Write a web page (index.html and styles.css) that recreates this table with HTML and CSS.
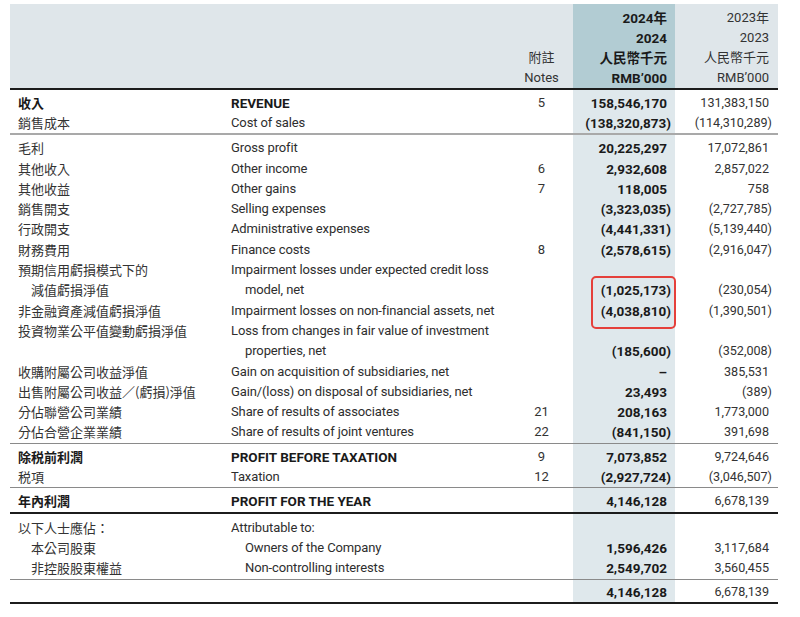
FILE: index.html
```html
<!DOCTYPE html>
<html lang="zh-Hant">
<head>
<meta charset="utf-8">
<title>綜合損益表</title>
<link rel="stylesheet" href="styles.css">
</head>
<body>
<table class="stmt">
  <colgroup>
    <col class="w-zh"><col class="w-en"><col class="w-note"><col class="w-cur"><col class="w-prev">
  </colgroup>
  <thead>
    <tr class="head">
      <th></th>
      <th></th>
      <th class="note"><div>附註</div><div>Notes</div></th>
      <th class="cur"><div>2024年</div><div>2024</div><div>人民幣千元</div><div>RMB’000</div></th>
      <th class="prev"><div>2023年</div><div>2023</div><div>人民幣千元</div><div>RMB’000</div></th>
    </tr>
  </thead>
  <tbody class="s1">
    <tr class="first"><td class="zh b">收入</td><td class="en b">REVENUE</td><td class="note">5</td><td class="cur pos">158,546,170</td><td class="prev pos">131,383,150</td></tr>
    <tr><td class="zh">銷售成本</td><td class="en">Cost of sales</td><td class="note"></td><td class="cur">(138,320,873)</td><td class="prev">(114,310,289)</td></tr>
  </tbody>
  <tbody class="s2">
    <tr class="first"><td class="zh">毛利</td><td class="en">Gross profit</td><td class="note"></td><td class="cur pos">20,225,297</td><td class="prev pos">17,072,861</td></tr>
    <tr><td class="zh">其他收入</td><td class="en">Other income</td><td class="note">6</td><td class="cur pos">2,932,608</td><td class="prev pos">2,857,022</td></tr>
    <tr><td class="zh">其他收益</td><td class="en">Other gains</td><td class="note">7</td><td class="cur pos">118,005</td><td class="prev pos">758</td></tr>
    <tr><td class="zh">銷售開支</td><td class="en">Selling expenses</td><td class="note"></td><td class="cur">(3,323,035)</td><td class="prev">(2,727,785)</td></tr>
    <tr><td class="zh">行政開支</td><td class="en">Administrative expenses</td><td class="note"></td><td class="cur">(4,441,331)</td><td class="prev">(5,139,440)</td></tr>
    <tr><td class="zh">財務費用</td><td class="en">Finance costs</td><td class="note">8</td><td class="cur">(2,578,615)</td><td class="prev">(2,916,047)</td></tr>
    <tr><td class="zh">預期信用虧損模式下的</td><td class="en">Impairment losses under expected credit loss</td><td class="note"></td><td class="cur"></td><td class="prev"></td></tr>
    <tr><td class="zh ind">減值虧損淨值</td><td class="en ind">model, net</td><td class="note"></td><td class="cur mark">(1,025,173)<span class="highlight-box"></span></td><td class="prev">(230,054)</td></tr>
    <tr><td class="zh">非金融資產減值虧損淨值</td><td class="en">Impairment losses on non-financial assets, net</td><td class="note"></td><td class="cur">(4,038,810)</td><td class="prev">(1,390,501)</td></tr>
    <tr><td class="zh">投資物業公平值變動虧損淨值</td><td class="en">Loss from changes in fair value of investment</td><td class="note"></td><td class="cur"></td><td class="prev"></td></tr>
    <tr><td class="zh"></td><td class="en ind">properties, net</td><td class="note"></td><td class="cur">(185,600)</td><td class="prev">(352,008)</td></tr>
    <tr><td class="zh">收購附屬公司收益淨值</td><td class="en">Gain on acquisition of subsidiaries, net</td><td class="note"></td><td class="cur pos">–</td><td class="prev pos">385,531</td></tr>
    <tr><td class="zh">出售附屬公司收益／(虧損)淨值</td><td class="en">Gain/(loss) on disposal of subsidiaries, net</td><td class="note"></td><td class="cur pos">23,493</td><td class="prev">(389)</td></tr>
    <tr><td class="zh">分佔聯營公司業績</td><td class="en">Share of results of associates</td><td class="note">21</td><td class="cur pos">208,163</td><td class="prev pos">1,773,000</td></tr>
    <tr><td class="zh">分佔合營企業業績</td><td class="en">Share of results of joint ventures</td><td class="note">22</td><td class="cur">(841,150)</td><td class="prev pos">391,698</td></tr>
  </tbody>
  <tbody class="s3">
    <tr class="first"><td class="zh b">除税前利潤</td><td class="en b">PROFIT BEFORE TAXATION</td><td class="note">9</td><td class="cur pos">7,073,852</td><td class="prev pos">9,724,646</td></tr>
    <tr><td class="zh">税項</td><td class="en">Taxation</td><td class="note">12</td><td class="cur">(2,927,724)</td><td class="prev">(3,046,507)</td></tr>
  </tbody>
  <tbody class="s4">
    <tr class="first"><td class="zh b">年內利潤</td><td class="en b">PROFIT FOR THE YEAR</td><td class="note"></td><td class="cur pos">4,146,128</td><td class="prev pos">6,678,139</td></tr>
  </tbody>
  <tbody class="s5">
    <tr class="first"><td class="zh">以下人士應佔：</td><td class="en">Attributable to:</td><td class="note"></td><td class="cur"></td><td class="prev"></td></tr>
    <tr><td class="zh ind2">本公司股東</td><td class="en ind">Owners of the Company</td><td class="note"></td><td class="cur pos">1,596,426</td><td class="prev pos">3,117,684</td></tr>
    <tr><td class="zh ind2">非控股股東權益</td><td class="en ind">Non-controlling interests</td><td class="note"></td><td class="cur pos">2,549,702</td><td class="prev pos">3,560,455</td></tr>
  </tbody>
  <tbody class="s6">
    <tr class="first"><td class="zh"></td><td class="en"></td><td class="note"></td><td class="cur pos">4,146,128</td><td class="prev pos">6,678,139</td></tr>
  </tbody>
</table>
</body>
</html>
```
FILE: styles.css
```css
html, body {
  margin: 0;
  padding: 0;
  background: #ffffff;
}

body {
  font-family: Roboto, "Noto Sans CJK TC", sans-serif;
  font-size: 13.5px;
  color: #2e2e2e;
}

.stmt {
  margin: 4px 0 0 10px;
  width: 768px;
  border-collapse: collapse;
  table-layout: fixed;
}

.w-zh { width: 213px; }
.w-en { width: 287px; }
.w-note { width: 63px; }
.w-cur { width: 102px; }
.w-prev { width: 103px; }

.stmt th,
.stmt td {
  padding: 0;
  white-space: nowrap;
}

/* header band */
.head th {
  background: #dfe6ea;
  vertical-align: bottom;
  font-weight: 400;
  padding-top: 4px;
  border-bottom: 2px solid #1c1c1c;
}
.head th div {
  line-height: 20px;
}
.head th.note {
  text-align: center;
  font-size: 13px;
  color: #333;
}
.head th.cur {
  background: #b2ccd3;
  text-align: right;
  padding-right: 8px;
  font-weight: 700;
  color: #1a1a1a;
}
.head th.prev {
  text-align: right;
  padding-right: 9px;
  font-size: 13px;
  color: #333;
}

/* body cells */
.stmt td {
  line-height: 20.3px;
}
.stmt td.zh {
  font-family: "Noto Sans CJK TC", sans-serif;
  font-size: 13px;
  padding-left: 8px;
  color: #333;
}
.stmt td.en {
  font-size: 13px;
  letter-spacing: -0.12px;
  padding-left: 8px;
  color: #2e2e2e;
}
.stmt td.ind { padding-left: 22px; }
.stmt td.zh.ind { padding-left: 21px; }
.stmt td.zh.ind2 { padding-left: 21px; }
.stmt td.b {
  font-weight: 700;
  color: #1a1a1a;
}
.stmt td.en.b {
  font-size: 13.5px;
  letter-spacing: 0;
}
.stmt td.note {
  text-align: center;
  font-size: 13px;
  color: #333;
}
.stmt td.cur {
  background: #dfe8ec;
  text-align: right;
  padding-right: 4px;
  font-weight: 700;
  color: #1a1a1a;
}
.stmt td.cur.pos { padding-right: 8px; }
.stmt td.prev {
  text-align: right;
  font-size: 12.6px;
  padding-right: 6px;
  color: #333;
}
.stmt td.prev.pos { padding-right: 9px; }

/* section spacing and rules */
.s1 tr.first td { padding-top: 3px; }
.s1 tr:last-child td { line-height: 20px; }
.s2 tr.first td { padding-top: 3px; border-top: 2px solid #a9a9a9; }
.s3 tr.first td { padding-top: 3px; border-top: 1px solid #8a8a8a; }
.s4 tr.first td { padding-top: 3px; border-top: 1px solid #8a8a8a; }
.s5 tr.first td { padding-top: 4px; border-top: 2px solid #1c1c1c; }
.s6 tr.first td { padding-top: 2px; border-top: 1px solid #8a8a8a; border-bottom: 2px solid #1c1c1c; }

/* red annotation box around two values */
.stmt td.mark { position: relative; }
.highlight-box {
  position: absolute;
  left: 18px;
  top: -4px;
  width: 85px;
  height: 53px;
  box-sizing: border-box;
  border: 2px solid #e5403b;
  border-radius: 5px;
}
```
